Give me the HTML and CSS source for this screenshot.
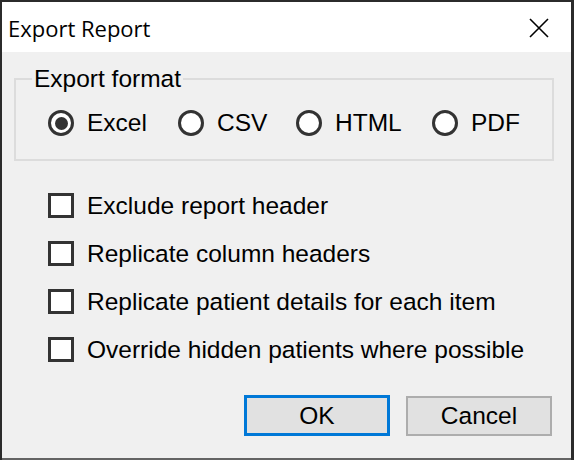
FILE: index.html
```html
<!DOCTYPE html>
<html>
<head>
<meta charset="utf-8">
<link rel="stylesheet" href="styles.css">
</head>
<body>
<div class="window">
  <div class="titlebar">
    <span class="title">Export Report</span>
    <svg class="close" width="20" height="20" viewBox="0 0 20 20"><path d="M1 1 L19 19 M19 1 L1 19" stroke="#000" stroke-width="1.6" fill="none"/></svg>
  </div>
  <div class="content">
    <fieldset class="group">
      <legend class="legend">Export format</legend>
      <div class="radios">
        <label class="radio"><span class="rb checked"><span class="dot"></span></span>Excel</label>
        <label class="radio"><span class="rb"></span>CSV</label>
        <label class="radio"><span class="rb"></span>HTML</label>
        <label class="radio"><span class="rb"></span>PDF</label>
      </div>
    </fieldset>
    <div class="checks">
      <label class="check"><span class="cb"></span>Exclude report header</label>
      <label class="check"><span class="cb"></span>Replicate column headers</label>
      <label class="check"><span class="cb"></span>Replicate patient details for each item</label>
      <label class="check"><span class="cb"></span>Override hidden patients where possible</label>
    </div>
    <div class="buttons">
      <div class="btn default">OK</div>
      <div class="btn">Cancel</div>
    </div>
  </div>
</div>
</body>
</html>
```
FILE: styles.css
```css
html, body {
  margin: 0;
  padding: 0;
}
body {
  font-family: "Liberation Sans", Arial, sans-serif;
  color: #000;
  background: #2b2b2b;
  width: 574px;
  height: 460px;
  overflow: hidden;
}
.window {
  width: 569px;
  height: 456px;
  margin: 2px 3px 0 2px;
  border-bottom: 2px solid #646464;
  background: #f0f0f0;
  display: flex;
  flex-direction: column;
}
.titlebar {
  height: 50px;
  background: #fff;
  display: flex;
  align-items: center;
  justify-content: space-between;
  padding: 0 22px 0 6px;
  flex: none;
}
.title {
  font-family: "Open Sans", sans-serif;
  font-size: 22px;
  padding-top: 1px;
}
.close {
  display: block;
  margin-top: 1px;
}
.content {
  flex: 1;
  padding: 14px 17px 0 12px;
  display: flex;
  flex-direction: column;
  font-size: 24.5px;
}
.group {
  margin: 0;
  min-width: 0;
  border: 2px solid #dcdcdc;
  padding: 0 0 24px 0;
}
.legend {
  padding: 0 2px;
  margin-left: 16px;
  line-height: 26px;
  height: 26px;
}
.radios {
  display: grid;
  grid-template-columns: 130px 118px 136px auto;
  padding-left: 32px;
  margin-top: 17px;
  height: 26px;
}
.radio {
  display: flex;
  align-items: center;
}
.rb {
  width: 20px;
  height: 20px;
  border: 3px solid #333;
  border-radius: 50%;
  background: #fff;
  margin-right: 13px;
  display: flex;
  align-items: center;
  justify-content: center;
  flex: none;
}
.dot {
  width: 13px;
  height: 13px;
  border-radius: 50%;
  background: #333;
}
.checks {
  display: flex;
  flex-direction: column;
  gap: 23px;
  margin-top: 32px;
  padding-left: 34px;
}
.check {
  display: flex;
  align-items: center;
  height: 25px;
}
.cb {
  width: 20px;
  height: 19px;
  border: 3px solid #333;
  background: #fff;
  margin-right: 13px;
  flex: none;
}
.buttons {
  display: flex;
  justify-content: flex-end;
  gap: 16px;
  margin-top: 33px;
  margin-right: 2px;
  align-items: flex-start;
}
.btn {
  width: 142px;
  height: 36px;
  border: 2px solid #adadad;
  background: #e1e1e1;
  display: flex;
  align-items: center;
  justify-content: center;
  margin-top: 1px;
}
.btn.default {
  border: 3px solid #0078d7;
  width: 140px;
  height: 35px;
  margin-top: 0;
}
```
